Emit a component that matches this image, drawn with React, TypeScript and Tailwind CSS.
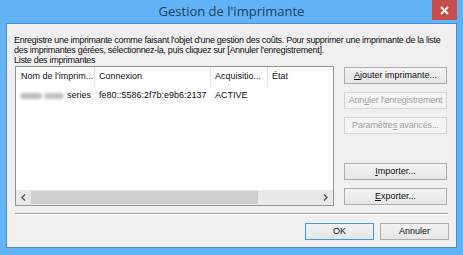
import React from 'react';

const font = { fontFamily: '"Liberation Sans", Arial, sans-serif' };

function Btn({ children, disabled, primary }: { children: React.ReactNode; disabled?: boolean; primary?: boolean }) {
  return (
    <div
      className={
        'flex items-center justify-center h-[17px] border text-[9px] leading-none whitespace-nowrap ' +
        (disabled
          ? 'border-[#d5d5d5] bg-[#f4f4f4] text-[#a3a3a3] tracking-[-0.15px]'
          : primary
          ? 'border-[#3c9be6] bg-gradient-to-b from-[#f3f3f3] to-[#e6e6e6] text-[#111]'
          : 'border-[#adadad] bg-gradient-to-b from-[#f3f3f3] to-[#e6e6e6] text-[#111]')
      }
    >
      {children}
    </div>
  );
}

export default function App() {
  return (
    <div className="w-[463px] h-[255px] bg-[#62b2f6] flex flex-col overflow-hidden" style={font}>
      {/* title bar */}
      <div className="relative h-[23px] flex items-center justify-center">
        <span className="text-[13px] text-[#1e3f60] mt-[1px]" style={{ fontFamily: '"Open Sans", sans-serif' }}>Gestion de l'imprimante</span>
        <div className="absolute right-[6px] top-0 w-[25px] h-[20px] bg-[#c74f4a] flex items-center justify-center">
          <svg width="9" height="9" viewBox="0 0 9 9">
            <path d="M1 1L8 8M8 1L1 8" stroke="#fff" strokeWidth="1.8" />
          </svg>
        </div>
      </div>

      {/* client */}
      <div className="mx-[6px] h-[225px] shrink-0 border border-[#4f8fc4] bg-[#f0f0f0] px-[7px] pt-[11px] flex flex-col text-[#111]">
        <div className="text-[9px] leading-[10px] whitespace-nowrap tracking-[-0.3px]">
          <div>Enregistre une imprimante comme faisant l'objet d'une gestion des coûts. Pour supprimer une imprimante de la liste</div>
          <div>des imprimantes gérées, sélectionnez-la, puis cliquez sur [Annuler l'enregistrement].</div>
          <div>Liste des imprimantes</div>
        </div>

        <div className="flex mt-[1px]">
          {/* list */}
          <div className="w-[319px] h-[140px] border border-[#8f959c] bg-white flex flex-col text-[9px] ml-[1px] whitespace-nowrap">
            <div className="flex h-[20px] items-center">
              <div className="w-[79px] pl-[5px] h-full flex items-center border-r border-[#e6e6e6]">Nom de l'imprim...</div>
              <div className="w-[116px] pl-[4px] h-full flex items-center border-r border-[#e6e6e6]">Connexion</div>
              <div className="w-[57px] pl-[4px] h-full flex items-center border-r border-[#e6e6e6]">Acquisitio...</div>
              <div className="pl-[4px] h-full flex items-center">État</div>
            </div>
            <div className="flex h-[17px] items-center">
              <div className="w-[79px] pl-[4px] flex items-center gap-[2px]">
                <span className="w-[22px] h-[6px] bg-[#b9b9b9] blur-[1.5px] rounded-sm" />
                <span className="w-[20px] h-[6px] bg-[#c4c4c4] blur-[1.5px] rounded-sm" />
                <span className="ml-[1px]">series</span>
              </div>
              <div className="w-[116px] pl-[4px]">fe80::5586:2f7b:e9b6:2137</div>
              <div className="w-[57px] pl-[4px]">ACTIVE</div>
            </div>
            <div className="flex-1" />
            <div className="h-[15px] bg-[#e8e8e8] flex items-center">
              <div className="w-[15px] flex justify-center">
                <svg width="5" height="7" viewBox="0 0 5 7"><path d="M4 0.5L1 3.5L4 6.5" stroke="#555" strokeWidth="1.4" fill="none" /></svg>
              </div>
              <div className="w-[227px] h-[13px] bg-[#cdcdcd]" />
              <div className="flex-1" />
              <div className="w-[15px] flex justify-center">
                <svg width="5" height="7" viewBox="0 0 5 7"><path d="M1 0.5L4 3.5L1 6.5" stroke="#555" strokeWidth="1.4" fill="none" /></svg>
              </div>
            </div>
          </div>

          {/* buttons */}
          <div className="w-[103px] ml-[10px] mt-[1px] flex flex-col">
            <Btn><span><u>A</u>jouter imprimante...</span></Btn>
            <div className="mt-[8px]"><Btn disabled><span>Ann<u>u</u>ler l'enregistrement</span></Btn></div>
            <div className="mt-[8px]"><Btn disabled><span>Paramètre<u>s</u> avancés...</span></Btn></div>
            <div className="mt-[29px]"><Btn><span><u>I</u>mporter...</span></Btn></div>
            <div className="mt-[8px]"><Btn><span><u>E</u>xporter...</span></Btn></div>
          </div>
        </div>

        <div className="mt-[7px] ml-[1px] w-[433px] h-[2px] border-t border-[#a0a0a0] border-b border-b-white" />

        <div className="flex justify-end gap-[6px] mt-[8px]">
          <div className="w-[69px]"><Btn primary>OK</Btn></div>
          <div className="w-[69px]"><Btn>Annuler</Btn></div>
        </div>
      </div>
    </div>
  );
}
